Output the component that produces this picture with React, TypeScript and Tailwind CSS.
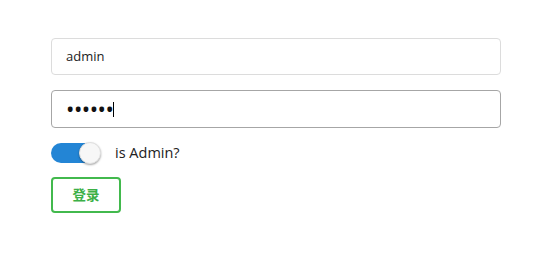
import React from "react";

export default function App() {
  return (
    <div
      className="w-[552px] h-[257px] bg-white pl-[51px] pt-[38px]"
      style={{ fontFamily: '"Open Sans", "Noto Sans", "Noto Sans CJK SC", sans-serif' }}
    >
      <div className="w-[450px] flex flex-col">
        <div className="h-[37px] border border-[#dcdcdc] rounded-[4px] flex items-center pl-[14px] text-[13px] text-[#222]">
          admin
        </div>
        <div className="mt-[15px] h-[38px] border border-[#a6a6a6] rounded-[4px] flex items-center pl-[15px] text-[#111]">
          <span className="text-[17px] tracking-[1.5px] leading-none font-bold">••••••</span>
          <span className="w-px h-[15px] bg-black ml-[-1px]" />
        </div>
        <div className="mt-[13px] flex items-center h-[24px]">
          <div className="relative w-[48px] h-[20px] rounded-full bg-[#2385d5]">
            <div className="absolute right-[-2px] top-[-1px] w-[22px] h-[22px] rounded-full bg-[#f7f7f7] shadow-[0_1px_2px_rgba(0,0,0,0.35)] border border-[#e0e0e0]" />
          </div>
          <span className="ml-[16px] text-[14.5px] text-[#222]">is Admin?</span>
        </div>
        <div className="mt-[12px]">
          <button className="w-[70px] h-[36px] border-2 border-[#42b94d] rounded-[4px] text-[#3cb047] text-[13.5px] font-semibold flex items-center justify-center bg-white">
            登录
          </button>
        </div>
      </div>
    </div>
  );
}
